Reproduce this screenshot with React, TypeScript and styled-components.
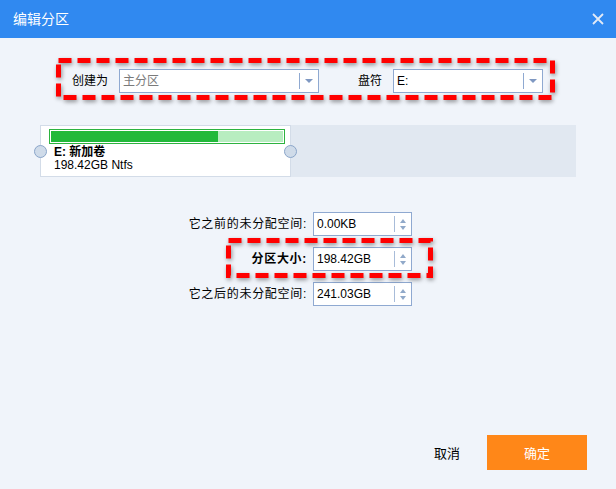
import * as React from "react";
import styled, { createGlobalStyle } from "styled-components";

const GlobalStyle = createGlobalStyle`
  html, body {
    margin: 0;
    padding: 0;
    background: #f0f4fa;
  }
  body {
    font-family: "Liberation Sans", "Noto Sans CJK SC", sans-serif;
    font-size: 12px;
    color: #000;
  }
`;

const Window = styled.div`
  width: 616px;
  height: 489px;
  display: flex;
  flex-direction: column;
  background: #f0f4fa;
`;

const TitleBar = styled.div`
  height: 38px;
  flex-shrink: 0;
  background: #3089f0;
  display: flex;
  align-items: center;
  justify-content: space-between;
  padding: 0 12px 0 13px;
`;

const Title = styled.div`
  color: #fff;
  font-size: 14px;
  line-height: 16px;
`;

const CloseButton = styled.svg`
  width: 12px;
  height: 12px;
  display: block;
`;

const DashSvg = styled.svg`
  position: absolute;
  overflow: visible;
  pointer-events: none;
  filter: drop-shadow(1px 2px 2px rgba(0, 0, 0, 0.4));
`;

const Highlight: React.FC<{ left: number; top: number; w: number; h: number }> = ({ left, top, w, h }) => (
  <DashSvg style={{ left, top }} width={w} height={h} viewBox={`0 0 ${w} ${h}`}>
    <rect
      x={2.5}
      y={2.5}
      width={w - 5}
      height={h - 5}
      fill="none"
      stroke="#ff0000"
      strokeWidth={5}
      strokeDasharray="13 6"
    />
  </DashSvg>
);

const TopRow = styled.div`
  position: relative;
  margin: 20px 0 0 56px;
  width: 499px;
  height: 42px;
  box-sizing: border-box;
  padding: 4px 0 0 16px;
  display: flex;
  align-items: center;
`;

const FieldLabel = styled.span<{ $gap?: number }>`
  margin-left: ${(p) => p.$gap ?? 0}px;
  line-height: 14px;
  white-space: nowrap;
`;

const SelectBox = styled.div<{ $width: number }>`
  width: ${(p) => p.$width}px;
  height: 24px;
  margin-left: 11px;
  box-sizing: border-box;
  border: 1px solid #8fa9d1;
  background: #fff;
  display: flex;
  align-items: center;
`;

const SelectText = styled.span<{ $muted?: boolean }>`
  flex: 1;
  padding-left: 3px;
  line-height: 14px;
  color: ${(p) => (p.$muted ? "#7a7a7a" : "#000")};
`;

const SelectArrow = styled.div`
  width: 18px;
  height: 16px;
  border-left: 1px solid #8fa9d1;
  display: flex;
  align-items: center;
  justify-content: center;

  &::after {
    content: "";
    border-left: 4px solid transparent;
    border-right: 4px solid transparent;
    border-top: 4px solid #7f98c2;
  }
`;

const Panel = styled.div`
  margin: 25px 0 0 40px;
  width: 536px;
  height: 52px;
  background: #e1e8f1;
  display: flex;
`;

const PartCard = styled.div`
  position: relative;
  width: 251px;
  box-sizing: border-box;
  border: 1px solid #d3dce8;
  background: #fff;
  padding: 3px 0 0 8px;
`;

const UsageBar = styled.div`
  width: 236px;
  height: 15px;
  box-sizing: border-box;
  border: 1px solid #2db33f;
  padding: 1px;
  background: #fff;
`;

const UsageTrack = styled.div`
  height: 100%;
  background: #b8edc0;
`;

const UsageFill = styled.div`
  height: 100%;
  background: #22b93a;
`;

const PartName = styled.div`
  margin: 2px 0 0 5px;
  font-weight: bold;
  line-height: 13px;
`;

const PartInfo = styled.div`
  margin-left: 5px;
  line-height: 13px;
`;

const Handle = styled.div<{ $side: "left" | "right" }>`
  position: absolute;
  top: 19px;
  ${(p) => p.$side}: -7px;
  width: 11px;
  height: 11px;
  border-radius: 50%;
  border: 1px solid #8aa5c9;
  background: #cfdbe9;
`;

const Form = styled.div`
  position: relative;
  margin: 35px 0 0 167px;
  display: grid;
  grid-template-columns: 140px 99px;
  column-gap: 6px;
  row-gap: 11px;
  width: 245px;
`;

const FormLabel = styled.div<{ $bold?: boolean }>`
  align-self: center;
  text-align: right;
  line-height: 14px;
  letter-spacing: 0.7px;
  font-weight: ${(p) => (p.$bold ? "bold" : "normal")};
  white-space: nowrap;
`;

const Spinner = styled.div`
  height: 24px;
  box-sizing: border-box;
  border: 1px solid #8fa9d1;
  background: #fff;
  display: flex;
  align-items: center;
`;

const SpinnerValue = styled.span`
  flex: 1;
  padding-left: 3px;
  line-height: 14px;
`;

const SpinnerArrows = styled.div`
  width: 16px;
  height: 16px;
  border-left: 1px solid #a8bcd9;
  display: flex;
  flex-direction: column;
  align-items: center;
  justify-content: center;
  gap: 3px;

  &::before,
  &::after {
    content: "";
    border-left: 3.5px solid transparent;
    border-right: 3.5px solid transparent;
  }
  &::before {
    border-bottom: 4px solid #91a9c9;
  }
  &::after {
    border-top: 4px solid #91a9c9;
  }
`;

const Footer = styled.div`
  margin-top: auto;
  padding: 0 29px 19px 0;
  display: flex;
  justify-content: flex-end;
  gap: 10px;
`;

const Button = styled.button<{ $primary?: boolean }>`
  height: 35px;
  width: ${(p) => (p.$primary ? 100 : 60)}px;
  border: none;
  padding: 0;
  font-family: inherit;
  font-size: 13px;
  color: ${(p) => (p.$primary ? "#fff" : "#000")};
  background: ${(p) => (p.$primary ? "#ff8718" : "transparent")};
  cursor: pointer;
`;

const sizes = [
  { label: "它之前的未分配空间:", value: "0.00KB" },
  { label: "分区大小:", value: "198.42GB", bold: true },
  { label: "它之后的未分配空间:", value: "241.03GB" },
];

export default function App() {
  return (
    <Window>
      <GlobalStyle />
      <TitleBar>
        <Title>编辑分区</Title>
        <CloseButton viewBox="0 0 12 12">
          <path d="M1 1 L11 11 M11 1 L1 11" stroke="#e2eaf6" strokeWidth={1.8} />
        </CloseButton>
      </TitleBar>

      <TopRow>
        <FieldLabel>创建为</FieldLabel>
        <SelectBox $width={200}>
          <SelectText $muted>主分区</SelectText>
          <SelectArrow />
        </SelectBox>
        <FieldLabel $gap={39}>盘符</FieldLabel>
        <SelectBox $width={150}>
          <SelectText>E:</SelectText>
          <SelectArrow />
        </SelectBox>
        <Highlight left={0} top={0} w={499} h={42} />
      </TopRow>

      <Panel>
        <PartCard>
          <UsageBar>
            <UsageTrack>
              <UsageFill style={{ width: "72%" }} />
            </UsageTrack>
          </UsageBar>
          <PartName>E: 新加卷</PartName>
          <PartInfo>198.42GB Ntfs</PartInfo>
          <Handle $side="left" />
          <Handle $side="right" />
        </PartCard>
      </Panel>

      <Form>
        {sizes.map((s) => (
          <React.Fragment key={s.label}>
            <FormLabel $bold={s.bold}>{s.label}</FormLabel>
            <Spinner>
              <SpinnerValue>{s.value}</SpinnerValue>
              <SpinnerArrows />
            </Spinner>
          </React.Fragment>
        ))}
        <Highlight left={59} top={26} w={207} h={40} />
      </Form>

      <Footer>
        <Button>取消</Button>
        <Button $primary>确定</Button>
      </Footer>
    </Window>
  );
}
